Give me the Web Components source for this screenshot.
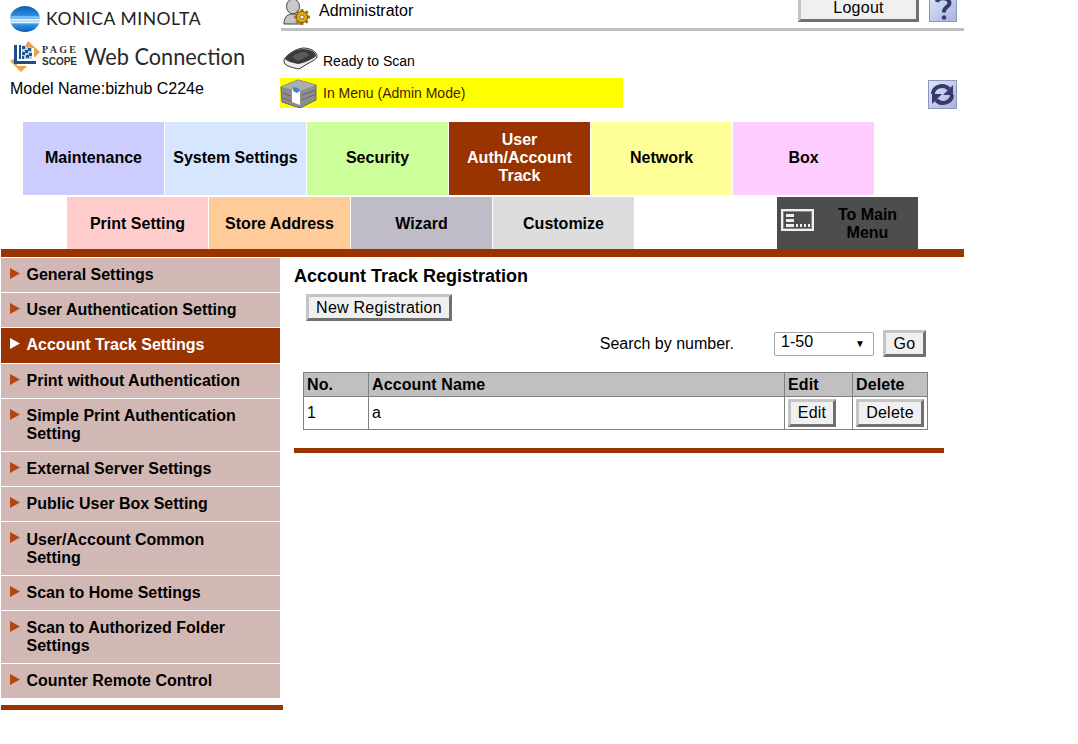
<!DOCTYPE html>
<html lang="en">
<head>
<meta charset="utf-8">
<title>Web Connection</title>
<style>
  html, body { margin: 0; background: #fff; }
  body { font-family: "Liberation Sans", Arial, sans-serif; color: #000; }
</style>
</head>
<body>

<km-page>
  <km-header slot="header"></km-header>

  <km-tabbar slot="tabs">
    <km-tab color="#ccccff" h="73">Maintenance</km-tab>
    <km-tab color="#d6e6ff" h="73">System Settings</km-tab>
    <km-tab color="#ccff99" h="73">Security</km-tab>
    <km-tab color="#993300" h="73" active>User<br>Auth/Account<br>Track</km-tab>
    <km-tab color="#ffff99" h="73">Network</km-tab>
    <km-tab color="#ffccff" h="73">Box</km-tab>
  </km-tabbar>

  <km-tabbar slot="tabs" second>
    <km-tab color="#ffcccc" h="52">Print Setting</km-tab>
    <km-tab color="#ffcc99" h="52">Store Address</km-tab>
    <km-tab color="#bfbcc8" h="52">Wizard</km-tab>
    <km-tab color="#dddddd" h="52">Customize</km-tab>
    <km-main-menu></km-main-menu>
  </km-tabbar>

  <km-sidenav slot="side">
    <km-nav-item>General Settings</km-nav-item>
    <km-nav-item>User Authentication Setting</km-nav-item>
    <km-nav-item active>Account Track Settings</km-nav-item>
    <km-nav-item>Print without Authentication</km-nav-item>
    <km-nav-item>Simple Print Authentication<br>Setting</km-nav-item>
    <km-nav-item>External Server Settings</km-nav-item>
    <km-nav-item>Public User Box Setting</km-nav-item>
    <km-nav-item style="padding-top:9.1px;padding-bottom:7.1px">User/Account Common<br>Setting</km-nav-item>
    <km-nav-item>Scan to Home Settings</km-nav-item>
    <km-nav-item>Scan to Authorized Folder<br>Settings</km-nav-item>
    <km-nav-item>Counter Remote Control</km-nav-item>
  </km-sidenav>

  <km-account-list slot="content"></km-account-list>
</km-page>

<script>
// small helper so each element below only has to give its html
function define(name, html, init) {
  customElements.define(name, class extends HTMLElement {
    constructor() {
      super();
      this.attachShadow({ mode: 'open' });
      this.shadowRoot.innerHTML = html;
    }
    connectedCallback() {
      if (init) init(this);
    }
  });
}

define('km-page', `
  <style>
    :host { display: block; width: 964px; }
    .side-wrap { display: flex; }
    .bar { height: 8px; background: #993300; margin-left: 1px; }
    .side { width: 283px; flex: none; }
    .content { flex: 1; }
  </style>
  <slot name="header"></slot>
  <slot name="tabs"></slot>
  <div class="bar"></div>
  <div class="side-wrap">
    <div class="side"><slot name="side"></slot></div>
    <div class="content"><slot name="content"></slot></div>
  </div>
`);

define('km-button', `
  <style>
    :host { display: inline-block; }
    button {
      display: block;
      box-sizing: border-box;
      width: 100%;
      height: 100%;
      margin: 0;
      padding: 0;
      background: #f0f0f0;
      border: 3px solid;
      border-color: #c4c4c4 #707070 #707070 #c4c4c4;
      font: 16px/16px "Liberation Sans", Arial, sans-serif;
      letter-spacing: 0.25px;
      color: #000;
    }
  </style>
  <button><slot></slot></button>
`);

define('km-header', `
  <style>
    :host { display: grid; grid-template-columns: 280px 1fr; height: 122px; }
    .left { padding: 5px 0 0 10px; }
    .konica { display: flex; align-items: center; height: 28px; }
    .konica span {
      margin: -2px 0 0 6px;
      font: 400 17.5px Lato, sans-serif;
      letter-spacing: 0.55px;
      color: #222;
      white-space: nowrap;
    }
    .scope { display: flex; align-items: center; height: 31px; margin-top: 8px; }
    .scope-words { margin: -2px 0 0 2px; width: 42px; font-weight: 700; color: #333; }
    .scope-words div { height: 11.5px; line-height: 11.5px; }
    .page { font-size: 10px; letter-spacing: 2.3px; font-family: "Liberation Serif", serif; }
    .sc { font-size: 10px; font-family: "Liberation Sans", sans-serif; }
    .web {
      display: inline-block;
      margin-top: -2px;
      font: 400 23px Lato, sans-serif;
      color: #2a2a2a;
      white-space: nowrap;
      transform: scaleX(.945);
      transform-origin: left center;
    }
    .model { margin-top: 8px; font-size: 16px; line-height: 18px; white-space: nowrap; }

    .right { min-width: 0; }
    .top {
      display: flex;
      height: 28px;
      margin-left: 1px;
      padding-right: 7px;
      border-bottom: 3px solid #c0c0c0;
      overflow: hidden;
    }
    .admin { display: flex; height: 26px; margin-left: 2px; }
    .admin span { margin-left: 6px; font-size: 16px; line-height: 21px; }
    .logout { width: 121px; height: 28px; margin: -6px 0 0 auto; }
    .help { margin: -6px 0 0 10px; }
    .status { display: flex; align-items: flex-end; height: 24px; margin: 15px 0 0 3px; font-size: 14px; }
    .status span { margin-left: 5px; line-height: 18px; }
    .mode-row { display: flex; margin-top: 8px; }
    .mode {
      display: flex;
      align-items: center;
      width: 343px;
      height: 30px;
      background: #ffff00;
      color: #4a1a00;
      font-size: 14px;
    }
    .mode span { margin-left: 6px; }
    .refresh { margin: 2px 0 0 305px; }
  </style>
  <div class="left">
    <div class="konica">
      <svg width="30" height="28" viewBox="0 0 30 28">
        <defs>
          <linearGradient id="sph" x1="0" y1="0" x2="0" y2="1">
            <stop offset="0" stop-color="#0b5fb4"/>
            <stop offset=".35" stop-color="#2a8be0"/>
            <stop offset=".62" stop-color="#bfe3fa"/>
            <stop offset=".72" stop-color="#2f93e2"/>
            <stop offset="1" stop-color="#0a5cb0"/>
          </linearGradient>
          <clipPath id="sc"><ellipse cx="15" cy="14" rx="15" ry="13"/></clipPath>
        </defs>
        <ellipse cx="15" cy="14" rx="15" ry="13" fill="url(#sph)"/>
        <g clip-path="url(#sc)" fill="#fff">
          <rect x="0" y="11.5" width="30" height="1" opacity=".55"/>
          <rect x="0" y="14" width="30" height="1.4" opacity=".8"/>
          <rect x="0" y="17" width="30" height="1" opacity=".7"/>
        </g>
      </svg>
      <span>KONICA MINOLTA</span>
    </div>
    <div class="scope">
      <svg width="30" height="31" viewBox="0 0 30 31">
        <path d="M18 0l12 11-6 6V7h-10z" fill="#f0a040"/>
        <path d="M0 20l11 11 6-6H7v-9z" fill="#f0a040"/>
        <path d="M4 4h3v16h19v3H4z" fill="#1c4d8f"/>
        <path d="M9 4h2v14H9z" fill="#1c4d8f"/>
        <path d="M12 4l10 3v11H12z" fill="#b9cde6"/>
        <path d="M12 5h3v3h-3zM18 7h3v3h-3zM15 9h3v3h-3zM12 11h3v3h-3zM19 12h3v3h-3zM16 14h3v3h-3zM12 15h2v3h-2z" fill="#24568f"/>
      </svg>
      <div class="scope-words">
        <div class="page">PAGE</div>
        <div class="sc">SCOPE</div>
      </div>
      <span class="web">Web Connection</span>
    </div>
    <div class="model">Model Name:bizhub C224e</div>
  </div>

  <div class="right">
    <div class="top">
      <div class="admin">
        <svg width="30" height="26" viewBox="0 0 30 26">
          <ellipse cx="10" cy="6.500" rx="6.500" ry="7.500" fill="#c9c9c9" stroke="#444"/>
          <path d="M1 24c0-7 3-9 7-10h4c3 1 5 2 6 4v6z" fill="#c4c4c4" stroke="#444"/>
          <path d="M19 9v16M11 17h16M13.300 11.300l11.400 11.400M24.700 11.300L13.300 22.700" stroke="#a97808" stroke-width="3"/>
          <circle cx="19" cy="17" r="5.700" fill="#dba520" stroke="#6a4a05" stroke-width=".8"/>
          <circle cx="19" cy="17" r="2" fill="#fff" stroke="#6a4a05" stroke-width=".7"/>
        </svg>
        <span>Administrator</span>
      </div>
      <km-button class="logout">Logout</km-button>
      <svg class="help" width="28" height="28" viewBox="0 0 28 28">
        <defs>
          <linearGradient id="hb" x1="0" y1="0" x2="1" y2="1">
            <stop offset="0" stop-color="#dfe6fa"/><stop offset="1" stop-color="#a4b2e0"/>
          </linearGradient>
        </defs>
        <rect x=".5" y=".5" width="27" height="27" fill="url(#hb)" stroke="#8f97bd"/>
        <path d="M8 8c1-5 12-5 12.500 1 .3 3.500-5.500 4-5.500 8.500v1" fill="none" stroke="#3a3a66" stroke-width="4"/>
        <circle cx="15" cy="23.500" r="2.300" fill="#3a3a66"/>
      </svg>
    </div>

    <div class="status">
      <svg width="35" height="24" viewBox="0 0 35 24">
        <path d="M1 14C3 9 12 3 20 2c8 0 14 4 14 8 0 3-4 5-10 8l-8 5c-6-1-12-3-14-5-1-1-1-3-1-4z" fill="#ececec" stroke="#333"/>
        <path d="M2 13C4 9 12 3 20 3c7 0 13 3 13 7-3 3-11 7-18 8-6-1-11-3-13-5z" fill="#3a3a3a"/>
        <path d="M9 11c3-3 8-5 13-5l5 3-12 6z" fill="#5a5a5a"/>
      </svg>
      <span>Ready to Scan</span>
    </div>

    <div class="mode-row">
      <div class="mode">
        <svg width="37" height="30" viewBox="0 0 37 30">
          <path d="M1 9l17-7 18 5v15l-16 8L2 24z" fill="#8d8d8d" stroke="#666"/>
          <path d="M1 9l17-7 18 5-16 6z" fill="#a8adb0"/>
          <path d="M12 11l8 2v14l-8-3z" fill="#fff"/>
          <path d="M13 9l5 1 2 3-3 2-4-2z" fill="#3f86c8"/>
          <path d="M22 17l14-5M22 22l14-6M3 15l8 3M3 20l8 3" stroke="#666" fill="none"/>
        </svg>
        <span>In Menu (Admin Mode)</span>
      </div>
      <svg class="refresh" width="29" height="29" viewBox="0 0 29 29">
        <defs>
          <linearGradient id="rb" x1="0" y1="0" x2="1" y2="1">
            <stop offset="0" stop-color="#dfe6fa"/><stop offset="1" stop-color="#a4b2e0"/>
          </linearGradient>
        </defs>
        <rect x=".5" y=".5" width="28" height="28" fill="url(#rb)" stroke="#8f97bd"/>
        <path d="M5 14c0-7 10-11 16-5" fill="none" stroke="#38386a" stroke-width="4"/>
        <path d="M25 5v10H15z" fill="#38386a"/>
        <path d="M24 15c0 7-10 11-16 5" fill="none" stroke="#38386a" stroke-width="4"/>
        <path d="M4 24V14h10z" fill="#38386a"/>
      </svg>
    </div>
  </div>
`);

define('km-tabbar', `
  <style>
    :host { display: flex; gap: 1px; padding-left: 23px; }
    :host([second]) { padding-left: 67px; margin-top: 2px; }
  </style>
  <slot></slot>
`);

define('km-tab', `
  <style>
    :host {
      display: flex;
      align-items: center;
      justify-content: center;
      box-sizing: border-box;
      width: 141px;
      padding-bottom: 2px;
      text-align: center;
      font: 700 16px/18px "Liberation Sans", Arial, sans-serif;
      color: #000;
    }
    :host([h="52"]) { padding: 2px 0 0; }
    :host([active]) { color: #fff; }
  </style>
  <div><slot></slot></div>
`, el => {
  el.style.background = el.getAttribute('color');
  el.style.height = el.getAttribute('h') + 'px';
});

define('km-main-menu', `
  <style>
    :host {
      display: flex;
      align-items: center;
      box-sizing: border-box;
      width: 141px;
      height: 52px;
      margin-left: 142px;
      padding: 2px 0 0 4px;
      background: #4d4d4d;
      text-align: center;
      font: 700 16px/18px "Liberation Sans", Arial, sans-serif;
      color: #000;
    }
    svg { flex: none; align-self: flex-start; margin-top: 10px; }
    div { flex: 1; padding: 0 0 0 14px; margin-right: 11px; }
  </style>
  <svg width="33" height="22" viewBox="0 0 33 22">
    <rect x="1" y="1" width="31" height="20" fill="#4d4d4d" stroke="#eee" stroke-width="2"/>
    <rect x="2.500" y="2.500" width="28" height="17" fill="none" stroke="#8a8a8a"/>
    <path d="M5 5h8v3H5zM5 10h8v3H5zM5 15h8v3H5zM15 15h2v3h-2zM19 15h2v3h-2zM23 15h2v3h-2zM27 15h2v3h-2z" fill="#eee"/>
  </svg>
  <div>To Main Menu</div>
`);

define('km-sidenav', `
  <style>
    :host { display: block; padding: 1px 0 0 1px; }
    .items { display: flex; flex-direction: column; gap: 1px; width: 279px; }
    .end { height: 5px; width: 282px; margin-top: 7px; background: #993300; }
  </style>
  <div class="items"><slot></slot></div>
  <div class="end"></div>
`);

define('km-nav-item', `
  <style>
    :host {
      display: block;
      position: relative;
      padding: 8.100px 8px 8.100px 25.500px;
      background: #d2b8b4;
      font: 700 16px/18px "Liberation Sans", Arial, sans-serif;
      color: #000;
    }
    :host([active]) { background: #993300; color: #fff; }
    svg { position: absolute; left: 9px; top: 10px; }
    :host([active]) path { fill: #fff; }
  </style>
  <svg width="10" height="11" viewBox="0 0 10 11"><path d="M0 0l10 5.500-10 5.500z" fill="#b3470f"/></svg>
  <slot></slot>
`);

define('km-account-list', `
  <style>
    :host { display: block; width: 650px; margin-left: 11px; padding-top: 9px; }
    h2 { margin: 0; font: 700 18px/21px "Liberation Sans", Arial, sans-serif; }
    .new { display: block; width: 146px; height: 27px; margin: 7px 0 0 12px; }
    .search {
      display: flex;
      align-items: center;
      justify-content: flex-end;
      height: 27px;
      margin-top: 9px;
      padding-right: 18px;
      font-size: 16px;
    }
    .select {
      display: flex;
      align-items: center;
      justify-content: space-between;
      box-sizing: border-box;
      width: 100px;
      height: 24px;
      margin: 0 9px 0 40px;
      padding: 0 8px 3px 6px;
      background: #fff;
      border: 1px solid #a6a6a6;
      border-radius: 2px;
    }
    .caret { font-size: 10px; margin-top: 3px; }
    .go { width: 43px; height: 27px; }
    table {
      width: 624px;
      margin: 15px 0 0 9px;
      border-collapse: collapse;
      table-layout: fixed;
      font-size: 16px;
      line-height: 18px;
    }
    th, td { border: 1px solid #808080; padding: 0 3px; text-align: left; }
    th { height: 23px; background: #c0c0c0; letter-spacing: 0.1px; }
    td { height: 33px; padding-bottom: 1px; box-sizing: border-box; }
    td.btn { padding: 0 3px; }
    td.btn km-button { height: 28px; display: block; }
    .edit { width: 48px; }
    .delete { width: 68px; }
    .rule { height: 5px; margin-top: 18px; background: #993300; }
  </style>
  <h2>Account Track Registration</h2>
  <km-button class="new">New Registration</km-button>
  <div class="search">
    <span>Search by number.</span>
    <div class="select"><span>1-50</span><span class="caret">▼</span></div>
    <km-button class="go">Go</km-button>
  </div>
  <table>
    <colgroup><col style="width:65px"><col style="width:416px"><col style="width:68px"><col style="width:75px"></colgroup>
    <tr><th>No.</th><th>Account Name</th><th>Edit</th><th>Delete</th></tr>
    <tr>
      <td>1</td><td>a</td>
      <td class="btn"><km-button class="edit">Edit</km-button></td>
      <td class="btn"><km-button class="delete">Delete</km-button></td>
    </tr>
  </table>
  <div class="rule"></div>
`);
</script>
</body>
</html>
